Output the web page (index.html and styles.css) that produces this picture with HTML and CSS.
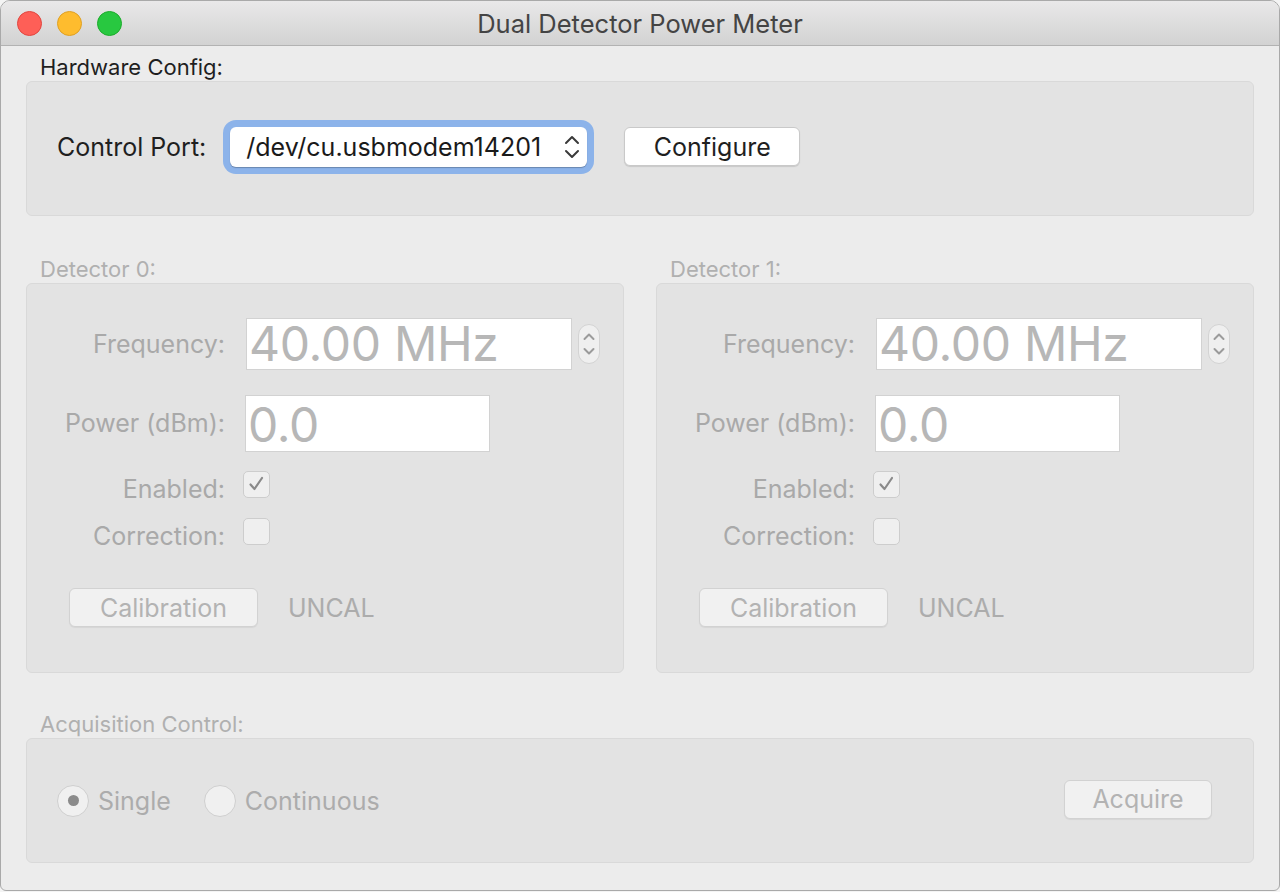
FILE: index.html
```html
<!DOCTYPE html>
<html>
<head>
<meta charset="utf-8">
<title>Dual Detector Power Meter</title>
<link rel="stylesheet" href="styles.css">
</head>
<body>
<div class="window">
  <div class="titlebar">
    <div class="lights">
      <span class="light red"></span>
      <span class="light yellow"></span>
      <span class="light green"></span>
    </div>
    <div class="title">Dual Detector Power Meter</div>
  </div>
  <div class="content">
    <section class="group">
      <div class="group-title">Hardware Config:</div>
      <div class="box hw-box">
        <span class="label">Control Port:</span>
        <div class="popup">
          <span class="popup-text">/dev/cu.usbmodem14201</span>
          <svg class="popup-arrows" width="18" height="26" viewBox="0 0 18 26"><path d="M3 9 L9 3 L15 9" fill="none" stroke="#3a3a3a" stroke-width="2" stroke-linecap="round" stroke-linejoin="round"/><path d="M3 17 L9 23 L15 17" fill="none" stroke="#3a3a3a" stroke-width="2" stroke-linecap="round" stroke-linejoin="round"/></svg>
        </div>
        <button class="btn configure">Configure</button>
      </div>
    </section>

    <div class="detectors">
      <section class="group detector">
        <div class="group-title disabled">Detector 0:</div>
        <div class="box det-box">
          <div class="row row-freq">
            <span class="label dlabel">Frequency:</span>
            <div class="field field-freq">40.00 MHz</div>
            <div class="stepper">
              <svg width="22" height="40" viewBox="0 0 22 40"><path d="M6.5 15 L11 10.5 L15.5 15" fill="none" stroke="#9b9b9b" stroke-width="2" stroke-linecap="round" stroke-linejoin="round"/><path d="M6.5 25 L11 29.5 L15.5 25" fill="none" stroke="#9b9b9b" stroke-width="2" stroke-linecap="round" stroke-linejoin="round"/></svg>
            </div>
          </div>
          <div class="row row-power">
            <span class="label dlabel">Power (dBm):</span>
            <div class="field field-power">0.0</div>
          </div>
          <div class="row row-check">
            <span class="label dlabel">Enabled:</span>
            <span class="checkbox"><svg width="27" height="26" viewBox="0 0 27 26"><path d="M7.5 13.5 L11.5 18 L19 7" fill="none" stroke="#8a8a8a" stroke-width="2.2" stroke-linecap="round" stroke-linejoin="round"/></svg></span>
          </div>
          <div class="row row-check row-corr">
            <span class="label dlabel">Correction:</span>
            <span class="checkbox"></span>
          </div>
          <div class="row row-cal">
            <button class="btn btn-disabled cal">Calibration</button>
            <span class="uncal">UNCAL</span>
          </div>
        </div>
      </section>

      <section class="group detector">
        <div class="group-title disabled">Detector 1:</div>
        <div class="box det-box">
          <div class="row row-freq">
            <span class="label dlabel">Frequency:</span>
            <div class="field field-freq">40.00 MHz</div>
            <div class="stepper">
              <svg width="22" height="40" viewBox="0 0 22 40"><path d="M6.5 15 L11 10.5 L15.5 15" fill="none" stroke="#9b9b9b" stroke-width="2" stroke-linecap="round" stroke-linejoin="round"/><path d="M6.5 25 L11 29.5 L15.5 25" fill="none" stroke="#9b9b9b" stroke-width="2" stroke-linecap="round" stroke-linejoin="round"/></svg>
            </div>
          </div>
          <div class="row row-power">
            <span class="label dlabel">Power (dBm):</span>
            <div class="field field-power">0.0</div>
          </div>
          <div class="row row-check">
            <span class="label dlabel">Enabled:</span>
            <span class="checkbox"><svg width="27" height="26" viewBox="0 0 27 26"><path d="M7.5 13.5 L11.5 18 L19 7" fill="none" stroke="#8a8a8a" stroke-width="2.2" stroke-linecap="round" stroke-linejoin="round"/></svg></span>
          </div>
          <div class="row row-check row-corr">
            <span class="label dlabel">Correction:</span>
            <span class="checkbox"></span>
          </div>
          <div class="row row-cal">
            <button class="btn btn-disabled cal">Calibration</button>
            <span class="uncal">UNCAL</span>
          </div>
        </div>
      </section>
    </div>

    <section class="group acq">
      <div class="group-title disabled">Acquisition Control:</div>
      <div class="box acq-box">
        <label class="radio-item"><span class="radio checked"><span class="dot"></span></span><span class="radio-label">Single</span></label>
        <label class="radio-item"><span class="radio"></span><span class="radio-label">Continuous</span></label>
        <span class="spacer"></span>
        <button class="btn btn-disabled acquire">Acquire</button>
      </div>
    </section>
  </div>
</div>
</body>
</html>
```

FILE: styles.css
```css
* { box-sizing: border-box; }
html, body {
  margin: 0;
  padding: 0;
  background: #f4f4f4;
}
body {
  font-family: "Inter", "Liberation Sans", sans-serif;
  color: #1f1f1f;
}
.window {
  width: 1280px;
  height: 891px;
  border: 1px solid #a9a9a9;
  border-radius: 10px 10px 6px 6px;
  background: #ececec;
  overflow: hidden;
}
.titlebar {
  height: 45px;
  background: linear-gradient(#e9e8e9, #d2d2d2);
  border-bottom: 1px solid #b2b2b2;
  display: flex;
  align-items: center;
  position: relative;
}
.lights {
  display: flex;
  gap: 15px;
  padding-left: 16px;
  padding-top: 1px;
}
.light {
  width: 25px;
  height: 25px;
  border-radius: 50%;
  display: block;
}
.red { background: #fe5f57; border: 1px solid #e1463f; }
.yellow { background: #febc2e; border: 1px solid #dfa023; }
.green { background: #28c840; border: 1px solid #1cac2b; }
.title {
  position: absolute;
  left: 0;
  right: 0;
  top: 0;
  bottom: 0;
  display: flex;
  align-items: center;
  justify-content: center;
  font-size: 25.5px;
  color: #444;
  pointer-events: none;
}
.content {
  padding: 10px 25px 0 25px;
}
.group-title {
  font-size: 22px;
  line-height: 22px;
  height: 22px;
  padding-left: 14px;
  margin-bottom: 3px;
  color: #1f1f1f;
}
.group-title.disabled { color: #b0b0b0; }
.box {
  background: #e3e3e3;
  border: 1px solid #d9d9d9;
  border-radius: 6px;
}
.hw-box {
  height: 135px;
  display: flex;
  align-items: center;
  padding-left: 30px;
  padding-bottom: 4px;
}
.label {
  font-size: 25px;
  white-space: nowrap;
}
.popup {
  margin-left: 24px;
  width: 357px;
  height: 40px;
  background: #fff;
  border-radius: 6px;
  box-shadow: 0 1px 1px rgba(0,0,0,0.25), 0 0 0 7px #8cb3ea;
  display: flex;
  align-items: center;
  padding-left: 16px;
  padding-right: 6px;
  font-size: 25px;
  color: #1a1a1a;
}
.popup-text { flex: 1; white-space: nowrap; }
.popup-arrows { display: block; }
.btn {
  font-family: inherit;
  font-size: 25px;
  border-radius: 6px;
  background: #fff;
  border: 1px solid #c9c9c9;
  box-shadow: 0 1px 1px rgba(0,0,0,0.12);
  color: #1f1f1f;
  padding: 0;
}
.configure {
  margin-left: 37px;
  width: 176px;
  height: 39px;
}
.detectors {
  display: flex;
  gap: 32px;
  margin-top: 42px;
}
.detector { width: 598px; }
.det-box {
  height: 390px;
  padding-top: 34px;
}
.row {
  display: flex;
  align-items: center;
}
.dlabel {
  width: 198px;
  text-align: right;
  color: #a9a9a9;
}
.row-freq { height: 52px; }
.field {
  background: #fff;
  border: 1px solid #d2d2d2;
  color: #b7b7b7;
  font-size: 48px;
  line-height: 1;
  display: flex;
  align-items: flex-end;
  padding-left: 2px;
  padding-bottom: 1px;
  letter-spacing: -0.3px;
}
.field-freq {
  margin-left: 21px;
  width: 326px;
  height: 52px;
}
.stepper {
  margin-left: 6px;
  width: 22px;
  height: 40px;
  border-radius: 11px;
  background: #efefef;
  border: 1px solid #d3d3d3;
  overflow: hidden;
}
.stepper svg { display: block; margin: -1px; }
.row-power { margin-top: 25px; height: 56px; }
.field-power {
  margin-left: 20px;
  width: 245px;
  height: 57px;
  padding-bottom: 2px;
}
.row-check { margin-top: 20px; height: 27px; }
.row-check .dlabel { position: relative; top: 4px; }
.row-corr { margin-top: 20px; }
.checkbox {
  margin-left: 18px;
  width: 27px;
  height: 27px;
  border-radius: 5px;
  background: #efefef;
  border: 1px solid #cdcdcd;
  display: block;
  overflow: hidden;
}
.checkbox svg { display: block; margin: -1px; }
.row-cal {
  margin-top: 43px;
  padding-left: 42px;
}
.btn-disabled {
  background: #f1f1f1;
  border: 1px solid #d2d2d2;
  color: #b3b3b3;
  box-shadow: 0 1px 1px rgba(0,0,0,0.06);
}
.cal {
  width: 189px;
  height: 39px;
}
.uncal {
  margin-left: 30px;
  font-size: 25px;
  color: #acacac;
}
.acq { margin-top: 40px; }
.acq-box {
  height: 125px;
  display: flex;
  align-items: center;
  padding-left: 30px;
  padding-right: 41px;
}
.radio-item {
  display: flex;
  align-items: center;
  margin-right: 33px;
}
.radio {
  width: 32px;
  height: 32px;
  border-radius: 50%;
  background: #f0f0f0;
  border: 1px solid #cfcfcf;
  display: flex;
  align-items: center;
  justify-content: center;
}
.dot {
  width: 11px;
  height: 11px;
  border-radius: 50%;
  background: #8b8b8b;
}
.radio-label {
  margin-left: 9px;
  font-size: 25px;
  color: #acacac;
}
.spacer { flex: 1; }
.acquire {
  width: 148px;
  height: 39px;
  margin-top: -3px;
}
```
